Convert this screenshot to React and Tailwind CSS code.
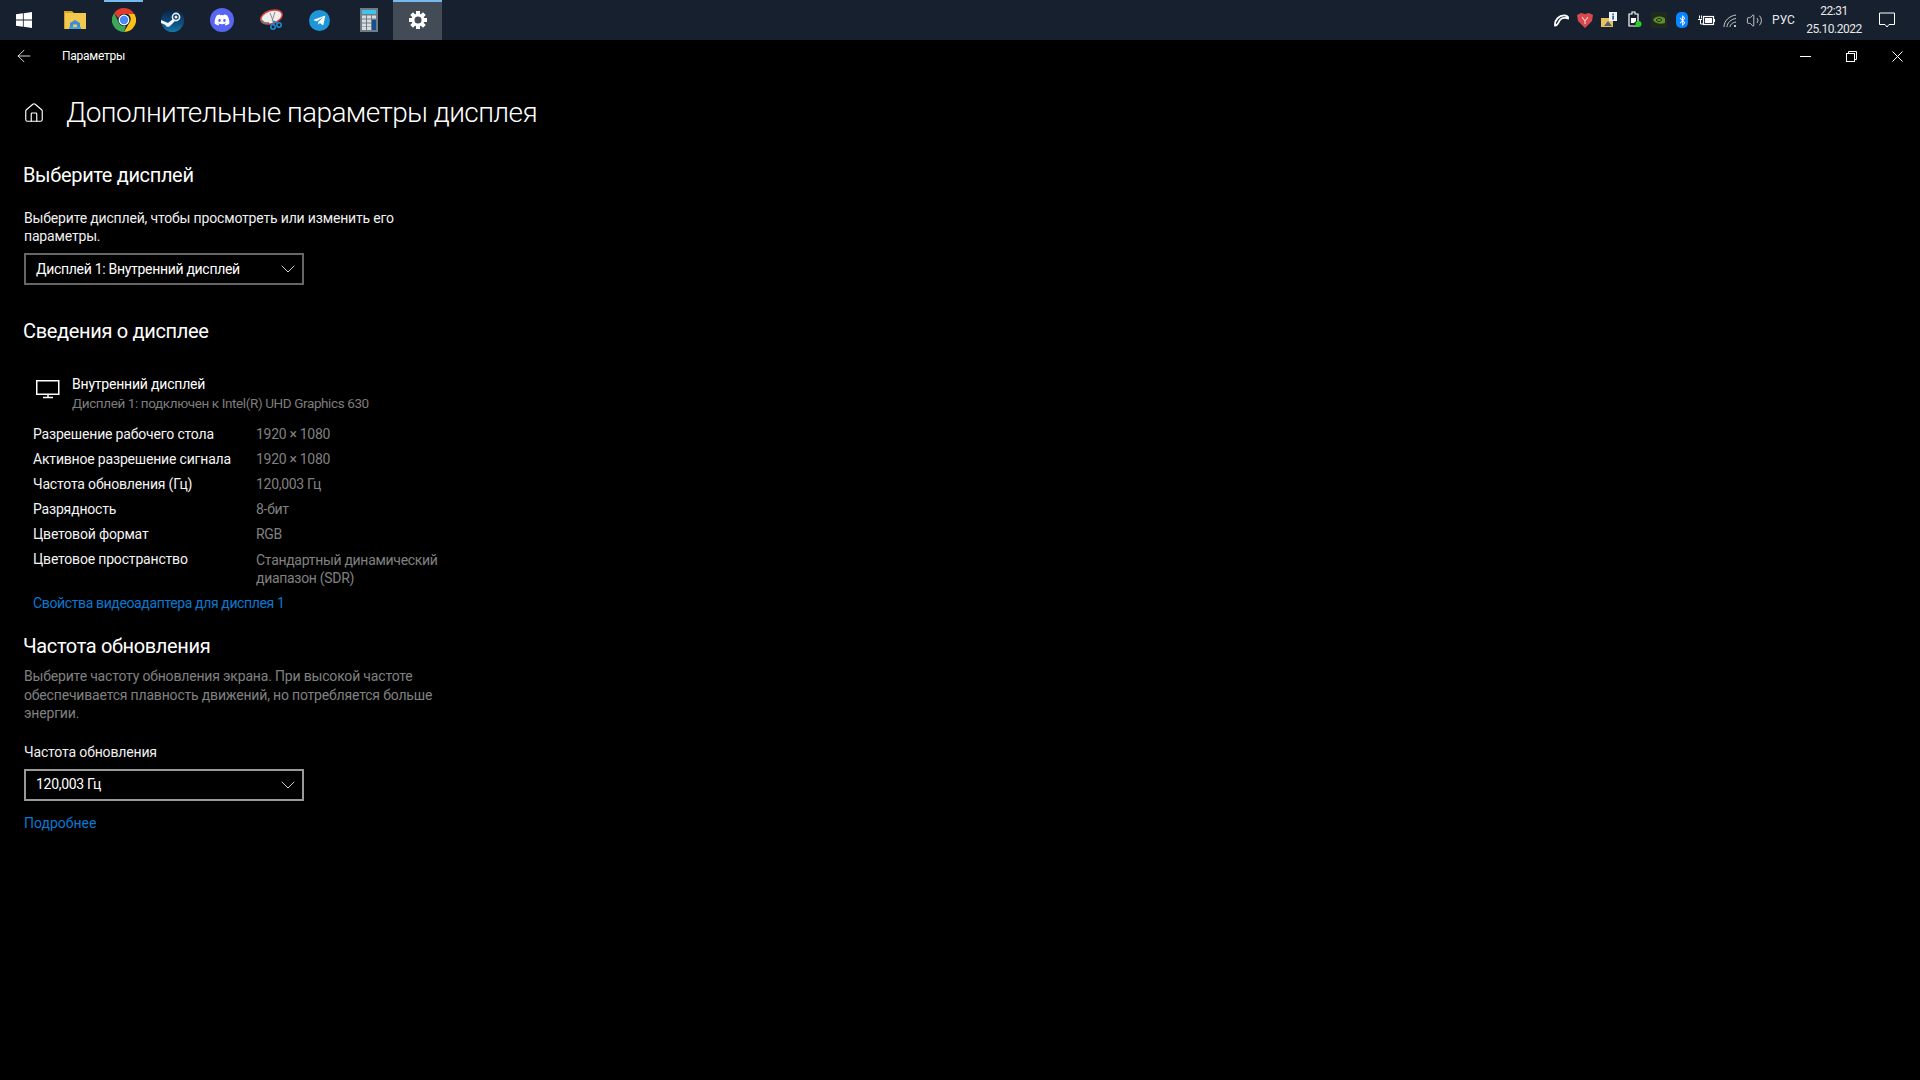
import { ArrowLeft, House, ChevronDown, Volume2 } from 'lucide-react'
import { FaDiscord, FaTelegramPlane, FaBluetoothB } from 'react-icons/fa'

const font = { fontFamily: '"Roboto", "Noto Sans", sans-serif' }

const rows = [
  ['Разрешение рабочего стола', '1920 × 1080'],
  ['Активное разрешение сигнала', '1920 × 1080'],
  ['Частота обновления (Гц)', '120,003 Гц'],
  ['Разрядность', '8-бит'],
  ['Цветовой формат', 'RGB'],
]

function WindowsLogo() {
  return (
    <svg width="16" height="16" viewBox="0 0 16 16" fill="#fff">
      <path d="M0 2.3 6.9 1.3V7.6H0ZM7.7 1.2 16 0V7.6H7.7ZM0 8.4H6.9V14.7L0 13.7ZM7.7 8.4H16V16L7.7 14.8Z" />
    </svg>
  )
}

function FolderIcon() {
  return (
    <svg width="22" height="20" viewBox="0 0 22 20">
      <path d="M0 1h8l2 2h-10z" fill="#d9a520" />
      <rect x="0" y="3" width="22" height="16" fill="#f2c94c" />
      <rect x="0" y="3" width="1" height="16" fill="#c99a2e" />
      <path d="M6 18V13L11 10 16 13V18H13V14.5H9V18Z" fill="#3a8fd9" />
      <rect x="5" y="17" width="12" height="2" fill="#4aa3e8" />
    </svg>
  )
}

function ChromeIcon() {
  return (
    <svg width="24" height="24" viewBox="0 0 24 24">
      <path d="M12 0A12 12 0 0 1 22.4 6H12A6 6 0 0 0 6.3 10.2L2.2 5A12 12 0 0 1 12 0Z" fill="#e33b2e" />
      <path d="M22.4 6A12 12 0 0 1 12 24L17.2 15A6 6 0 0 0 16 6Z" fill="#fbc116" />
      <path d="M12 24A12 12 0 0 1 2.2 5L7 14.9A6 6 0 0 0 14 17.7Z" fill="#3aa757" />
      <circle cx="12" cy="12" r="5.4" fill="#fff" />
      <circle cx="12" cy="12" r="4.2" fill="#4a8af4" />
    </svg>
  )
}

function SteamIcon() {
  return (
    <svg width="23" height="23" viewBox="0 0 23 23" fill="none">
      <defs>
        <linearGradient id="steamBg" x1="0" y1="0" x2="0" y2="1">
          <stop offset="0" stopColor="#0b1f3f" />
          <stop offset="0.6" stopColor="#0d4d80" />
          <stop offset="1" stopColor="#1477a8" />
        </linearGradient>
      </defs>
      <circle cx="11.500" cy="11.500" r="11.500" fill="url(#steamBg)" />
      <circle cx="15" cy="8" r="3.600" stroke="#e8eef3" strokeWidth="1.600" />
      <circle cx="15" cy="8" r="1.500" fill="#e8eef3" />
      <path d="M0 11 7 14 12 10 14 12 9 17C7.500 18.500 5 18 4.500 16L0 14Z" fill="#f4f7f9" />
    </svg>
  )
}

function SnipIcon() {
  return (
    <svg width="24" height="24" viewBox="0 0 24 24" fill="none">
      <ellipse cx="12.5" cy="9" rx="11" ry="6.5" transform="rotate(-18 12.5 9)" fill="#f1eeee" stroke="#d8403f" strokeWidth="1.5" />
      <path d="M2 12c2 3 5 3.5 8 3" stroke="#77767a" strokeWidth="2" />
      <path d="M11 5l4 10M16 4l-3 9" stroke="#8a8a8a" strokeWidth="1" />
      <circle cx="14" cy="19" r="2.2" stroke="#1f8ad2" strokeWidth="1.6" />
      <circle cx="20" cy="17" r="2.2" stroke="#1f8ad2" strokeWidth="1.6" />
      <path d="M14 13l1 4M15 13l4 3" stroke="#1f8ad2" strokeWidth="1.2" />
    </svg>
  )
}

function CalcIcon() {
  return (
    <svg width="18" height="24" viewBox="0 0 18 24">
      <rect width="18" height="24" fill="#6f7b85" />
      <rect x="2" y="2" width="14" height="4" fill="#3cc5ee" />
      {[7.5, 11.5, 15.5, 19].map(y =>
        [2, 7].map(x => <rect key={`${x}-${y}`} x={x} y={y} width="4" height="3" fill="#d8dde1" />)
      )}
      <rect x="12" y="7.5" width="4" height="3" fill="#d8dde1" />
      <rect x="12" y="12" width="4" height="10" fill="#14508f" />
    </svg>
  )
}

function GearIcon() {
  return (
    <svg width="18" height="18" viewBox="0 0 18 18" fill="none">
      <circle cx="9" cy="9" r="5" stroke="#fff" strokeWidth="3" />
      {[0, 45, 90, 135, 180, 225, 270, 315].map(a => (
        <rect key={a} x="7" y="0" width="4" height="3.5" fill="#fff" transform={`rotate(${a} 9 9)`} />
      ))}
    </svg>
  )
}

function Tile({ children, open, active }) {
  return (
    <div className={`relative w-[49px] h-10 flex items-center justify-center ${active ? 'bg-[#424b56]' : ''}`}>
      {open && <span className={`absolute top-0 h-0.5 bg-[#76b9ed] ${active ? 'inset-x-0' : 'inset-x-[5px]'}`} />}
      {children}
    </div>
  )
}

function Tray({ w, children }) {
  return <div className={`${w} h-10 flex items-center justify-center`}>{children}</div>
}

function Taskbar() {
  return (
    <div className="h-10 bg-[#16202e] flex items-center text-white">
      <div className="w-[50px] h-10 flex items-center pl-4"><WindowsLogo /></div>
      <Tile><FolderIcon /></Tile>
      <Tile open><ChromeIcon /></Tile>
      <Tile><SteamIcon /></Tile>
      <Tile>
        <div className="w-6 h-6 rounded-full bg-[#5865f2] flex items-center justify-center">
          <FaDiscord size={16} color="#fff" />
        </div>
      </Tile>
      <Tile><SnipIcon /></Tile>
      <Tile>
        <div className="w-[21px] h-[21px] rounded-full bg-[#1f96d8] flex items-center justify-center">
          <FaTelegramPlane size={13} color="#fff" />
        </div>
      </Tile>
      <Tile><CalcIcon /></Tile>
      <Tile open active><GearIcon /></Tile>

      <div className="ml-auto flex items-center">
        <Tray w="w-6">
          <svg width="15" height="13" viewBox="0 0 15 13" fill="none">
            <path d="M1 11.500C.5 6 5 1 11 1.500 13 1.700 14.500 3 14 4.500 12 3.500 8 3.500 6 6 4.500 8 3.500 12 1 11.500Z" fill="#16202e" stroke="#fff" strokeWidth="1.800" />
          </svg>
        </Tray>
        <Tray w="w-6">
          <svg width="16" height="16" viewBox="0 0 16 16">
            <path d="M0 3 4 1 8 2 12 1 16 3 15 9 8 16 1 9Z" fill="#d9484e" />
            <path d="M5 5 8 9 11 5M8 9V12" stroke="#f6c9c9" strokeWidth="1.2" fill="none" />
          </svg>
        </Tray>
        <Tray w="w-6">
          <svg width="16" height="16" viewBox="0 0 16 16">
            <rect x="0" y="6" width="12" height="9" fill="#e6c35c" />
            <path d="M3 14 7 9 11 14Z" fill="#55606a" />
            <rect x="8" y="0" width="8" height="9" fill="#f2f4f7" />
            <rect x="11.3" y="1.5" width="1.6" height="1.4" fill="#1b4fa0" />
            <rect x="11.3" y="3.6" width="1.6" height="4" fill="#1b4fa0" />
          </svg>
        </Tray>
        <Tray w="w-7">
          <svg width="16" height="18" viewBox="0 0 16 18" fill="none">
            <path d="M2 3H5V1H8V3H11V15H2Z" stroke="#fff" strokeWidth="1.2" />
            <path d="M4 7H9V10L7 12H4Z" fill="#fff" />
            <circle cx="11.5" cy="13" r="3" fill="#22d41f" />
          </svg>
        </Tray>
        <Tray w="w-[20px]">
          <div className="w-4 h-4 bg-[#1e2a1c] flex items-center justify-center">
            <svg width="14" height="10" viewBox="0 0 14 10" fill="none">
              <path d="M1 5C3 1 9 .5 13 3.500V8C9 9.500 4 9 1 5Z" fill="#5d8f2c" />
              <path d="M4 5C6 3 8.500 3 10 5 8 7 6 7 4 5Z" stroke="#1e2a1c" strokeWidth="1" />
            </svg>
          </div>
        </Tray>
        <Tray w="w-[26px]">
          <div className="w-[12px] h-4 rounded-[5px] bg-[#0a84ff] flex items-center justify-center">
            <FaBluetoothB size={11} color="#fff" />
          </div>
        </Tray>
        <Tray w="w-[22px]">
          <svg width="17" height="11" viewBox="0 0 17 11" fill="none">
            <path d="M0 4.500H4M1.500 .5V3.500M3.500 .5V3.500M2.500 5V9H5" stroke="#fff" strokeWidth="1" />
            <rect x="5.500" y="1.500" width="10" height="8" stroke="#fff" strokeWidth="1.200" />
            <rect x="7" y="3" width="7" height="5" fill="#fff" />
            <rect x="16" y="4" width="1" height="3" fill="#fff" />
          </svg>
        </Tray>
        <Tray w="w-[26px]">
          <svg width="14" height="13" viewBox="0 0 14 13" fill="none" stroke="#c9cdd2" strokeWidth="1">
            <path d="M1 13C1 7 6 2 13 1M4 13C4 9 8 5 13 4.500M7 13C7 11 9 8.500 13 8" />
            <circle cx="12" cy="12" r="1" fill="#fff" stroke="none" />
          </svg>
        </Tray>
        <Tray w="w-[22px]">
          <Volume2 size={17} strokeWidth={1.25} color="#d5d8dc" />
        </Tray>
        <Tray w="w-[37px]">
          <span className="text-[12px] text-[#e6e8ea]">РУС</span>
        </Tray>
        <div className="w-[64px] h-10 flex flex-col items-center justify-center text-[12px] leading-[18px] tracking-[-0.5px] text-[#e6e8ea]">
          <span>22:31</span>
          <span>25.10.2022</span>
        </div>
        <Tray w="w-[42px]">
          <svg width="16" height="16" viewBox="0 0 16 16" fill="none" stroke="#fff" strokeWidth="1">
            <path d="M.5 1H15.500V12.500H10L8 15 6 12.500H.5Z" />
          </svg>
        </Tray>
        <div className="w-[12px]" />
      </div>
    </div>
  )
}

function Dropdown({ label, borderClass }) {
  return (
    <div className={`w-[280px] h-8 border-2 ${borderClass} flex items-center justify-between pl-[10px] pr-[2px] text-[14px] tracking-[-0.3px] text-white`}>
      <span>{label}</span>
      <ChevronDown size={24} strokeWidth={1} color="#d0d0d0" />
    </div>
  )
}

export default function App() {
  return (
    <div style={font} className="w-[1920px] h-[1080px] bg-black text-white overflow-hidden">
      <Taskbar />

      {/* title bar */}
      <div className="h-8 flex items-center">
        <div className="w-[62px] pl-[14px]"><ArrowLeft size={20} strokeWidth={1} /></div>
        <span className="text-[12px] tracking-[-0.25px]">Параметры</span>
        <div className="ml-auto flex items-center text-white">
          <div className="w-[46px] flex justify-center">
            <svg width="11" height="11" viewBox="0 0 11 11" stroke="#fff" strokeWidth="1"><path d="M0 5.500H11" /></svg>
          </div>
          <div className="w-[46px] flex justify-center">
            <svg width="11" height="11" viewBox="0 0 11 11" fill="none" stroke="#fff" strokeWidth="1">
              <rect x=".5" y="2.500" width="8" height="8" />
              <path d="M2.500 2.500V.5H10.500V8.500H8.500" />
            </svg>
          </div>
          <div className="w-[46px] flex justify-center">
            <svg width="11" height="11" viewBox="0 0 11 11" stroke="#fff" strokeWidth="1"><path d="M.5.500 10.500 10.500M10.500.500 .5 10.500" /></svg>
          </div>
        </div>
      </div>

      <div className="pl-6">
        <div className="h-10 mt-[21px] flex items-center">
          <House size={22} strokeWidth={1.25} className="-ml-[1px]" />
          <h1 className="ml-[21px] text-[28px] font-light leading-10 tracking-[-0.6px]">Дополнительные параметры дисплея</h1>
        </div>

        <h2 className="mt-7 -ml-[1px] text-[20px] leading-7 tracking-[-0.35px]">Выберите дисплей</h2>
        <p className="mt-5 text-[14px] leading-[18px] tracking-[-0.17px] text-[#f0f0f0]">
          Выберите дисплей, чтобы просмотреть или изменить его<br />параметры.
        </p>
        <div className="mt-2"><Dropdown label="Дисплей 1: Внутренний дисплей" borderClass="border-[#666666]" /></div>

        <h2 className="mt-8 -ml-[1px] text-[20px] leading-7 tracking-[-0.33px]">Сведения о дисплее</h2>
        <div className="mt-[30px] flex">
          <div className="w-[48px] pl-3 pt-[5px]">
            <svg width="24" height="19" viewBox="0 0 24 19" fill="none" stroke="#fff" strokeWidth="1.5">
              <rect x=".75" y=".75" width="22" height="13.500" />
              <path d="M12 14v3.500M7 17.500h10" />
            </svg>
          </div>
          <div>
            <div className="text-[14px] leading-[19px] tracking-[-0.2px]">Внутренний дисплей</div>
            <div className="text-[13.5px] leading-[19px] tracking-[-0.39px] text-[#7c7c7c]">Дисплей 1: подключен к Intel(R) UHD Graphics 630</div>
          </div>
        </div>

        <div className="mt-[9px] ml-[9px] grid grid-cols-[223px_1fr] text-[14px]">
          {rows.map(([k, v]) => (
            <div key={k} className="contents">
              <div className="h-[25px] leading-[25px] tracking-[-0.18px] text-[#f4f4f4]">{k}</div>
              <div className="h-[25px] leading-[25px] tracking-[-0.3px] text-[#808080]">{v}</div>
            </div>
          ))}
          <div className="leading-[25px] tracking-[-0.18px] text-[#f4f4f4]">Цветовое пространство</div>
          <div className="pt-1 leading-[18px] tracking-[-0.3px] text-[#808080]">Стандартный динамический<br />диапазон (SDR)</div>
        </div>

        <a className="block mt-[7px] ml-[9px] text-[14px] leading-[18px] tracking-[-0.37px] text-[#0b78d0]">Свойства видеоадаптера для дисплея 1</a>

        <h2 className="mt-5 -ml-[1px] text-[20px] leading-7 tracking-[-0.35px]">Частота обновления</h2>
        <p className="mt-[7px] text-[14px] leading-[18.5px] tracking-[-0.18px] text-[#808080]">
          Выберите частоту обновления экрана. При высокой частоте<br />
          обеспечивается плавность движений, но потребляется больше<br />
          энергии.
        </p>
        <div className="mt-5 text-[14px] leading-[18px] tracking-[-0.15px] text-[#f0f0f0]">Частота обновления</div>
        <div className="mt-2"><Dropdown label="120,003 Гц" borderClass="border-[#999999]" /></div>
        <a className="block mt-[13px] text-[14px] leading-[18px] text-[#0b78d0]">Подробнее</a>
      </div>
    </div>
  )
}
